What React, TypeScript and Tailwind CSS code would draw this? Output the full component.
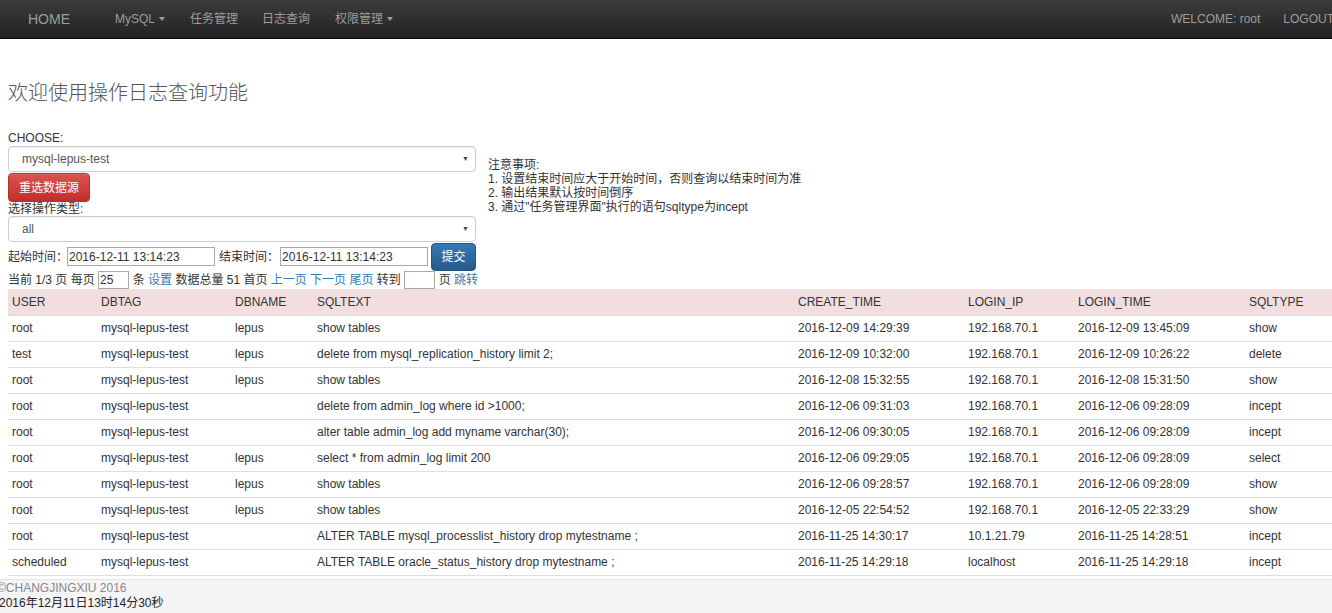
import React from 'react';

const rows = [
  ['root', 'mysql-lepus-test', 'lepus', 'show tables', '2016-12-09 14:29:39', '192.168.70.1', '2016-12-09 13:45:09', 'show'],
  ['test', 'mysql-lepus-test', 'lepus', 'delete from mysql_replication_history limit 2;', '2016-12-09 10:32:00', '192.168.70.1', '2016-12-09 10:26:22', 'delete'],
  ['root', 'mysql-lepus-test', 'lepus', 'show tables', '2016-12-08 15:32:55', '192.168.70.1', '2016-12-08 15:31:50', 'show'],
  ['root', 'mysql-lepus-test', '', 'delete from admin_log where id >1000;', '2016-12-06 09:31:03', '192.168.70.1', '2016-12-06 09:28:09', 'incept'],
  ['root', 'mysql-lepus-test', '', 'alter table admin_log add myname varchar(30);', '2016-12-06 09:30:05', '192.168.70.1', '2016-12-06 09:28:09', 'incept'],
  ['root', 'mysql-lepus-test', 'lepus', 'select * from admin_log limit 200', '2016-12-06 09:29:05', '192.168.70.1', '2016-12-06 09:28:09', 'select'],
  ['root', 'mysql-lepus-test', 'lepus', 'show tables', '2016-12-06 09:28:57', '192.168.70.1', '2016-12-06 09:28:09', 'show'],
  ['root', 'mysql-lepus-test', 'lepus', 'show tables', '2016-12-05 22:54:52', '192.168.70.1', '2016-12-05 22:33:29', 'show'],
  ['root', 'mysql-lepus-test', '', 'ALTER TABLE mysql_processlist_history drop mytestname ;', '2016-11-25 14:30:17', '10.1.21.79', '2016-11-25 14:28:51', 'incept'],
  ['scheduled', 'mysql-lepus-test', '', 'ALTER TABLE oracle_status_history drop mytestname ;', '2016-11-25 14:29:18', 'localhost', '2016-11-25 14:29:18', 'incept'],
];

const headers = ['USER', 'DBTAG', 'DBNAME', 'SQLTEXT', 'CREATE_TIME', 'LOGIN_IP', 'LOGIN_TIME', 'SQLTYPE'];
const widths = [89, 134, 82, 481, 170, 110, 171, 87];

function Caret() {
  return <span className="inline-block w-0 h-0 ml-[4px] border-x-[3px] border-x-transparent border-t-[4px] border-t-current align-middle" />;
}

function FakeSelect({ value }: { value: string }) {
  return (
    <div className="h-[26px] w-[468px] border border-[#ccc] rounded-[4px] bg-white shadow-[inset_0_1px_1px_rgba(0,0,0,0.075)] flex items-center pl-[13px] pr-[6px] text-[12px] text-[#555]">
      <span className="flex-1">{value}</span>
      <span className="text-[7px] text-[#444]">▼</span>
    </div>
  );
}

export default function App() {
  return (
    <div className="min-h-[613px] bg-white text-[#333] text-[12px] font-['Liberation_Sans','Noto_Sans_CJK_SC',sans-serif] overflow-hidden">
      {/* Navbar */}
      <div className="h-[39px] bg-linear-to-b from-[#3c3c3c] to-[#222] border-b border-[#080808] flex items-center text-[#9d9d9d] text-[12px] whitespace-nowrap">
        <span className="ml-[28px] text-[14px]">HOME</span>
        <span className="ml-[45px] flex items-center">MySQL<Caret /></span>
        <span className="ml-[25px]">任务管理</span>
        <span className="ml-[24px]">日志查询</span>
        <span className="ml-[25px] flex items-center">权限管理<Caret /></span>
        <span className="ml-auto">WELCOME: root</span>
        <span className="ml-[23px] mr-[-2px]">LOGOUT</span>
      </div>

      <h3 className="mt-[43px] ml-[8px] h-[22px] leading-[22px] text-[20px] text-[#555] font-light">欢迎使用操作日志查询功能</h3>

      <div className="flex mt-[27px] ml-[8px]">
        <div className="w-[470px] flex flex-col">
          <div className="h-[14px] leading-[14px]">CHOOSE:</div>
          <div className="mt-[1px]"><FakeSelect value="mysql-lepus-test" /></div>
          <div className="mt-[1px]">
            <button className="h-[29px] px-[10px] rounded-[4px] text-white text-[12px] bg-linear-to-b from-[#d9534f] to-[#c12e2a] border border-[#b92c28] shadow-[inset_0_1px_0_rgba(255,255,255,0.15)]">重选数据源</button>
          </div>
          <div className="h-[14px] leading-[14px]">选择操作类型:</div>
          <FakeSelect value="all" />
          <div className="h-[29px] flex items-center whitespace-nowrap">
            <span>起始时间：</span>
            <div className="h-[19px] w-[148px] border border-[#a9a9a9] flex items-center pl-[1px] ml-[-1px]">2016-12-11 13:14:23</div>
            <span className="ml-[4px]">结束时间：</span>
            <div className="h-[19px] w-[148px] border border-[#a9a9a9] flex items-center pl-[1px] ml-[1px]">2016-12-11 13:14:23</div>
            <button className="ml-[3px] h-[28px] w-[45px] rounded-[4px] text-white text-[12px] bg-linear-to-b from-[#337ab7] to-[#265a88] border border-[#245580]">提交</button>
          </div>
          <div className="h-[18px] flex items-center whitespace-nowrap">
            <span>当前 1/3 页 每页&nbsp;</span>
            <div className="h-[18px] w-[34px] border border-[#a9a9a9] flex items-center pl-[1px]">25</div>
            <span>&nbsp;条 <span className="text-[#337ab7]">设置</span> 数据总量 51 首页 <span className="text-[#337ab7]">上一页 下一页 尾页</span> 转到&nbsp;</span>
            <div className="h-[18px] w-[34px] border border-[#a9a9a9]" />
            <span>&nbsp;页 <span className="text-[#337ab7]">跳转</span></span>
          </div>
        </div>
        <div className="ml-[10px] mt-[27px] leading-[14px] whitespace-nowrap">
          <div>注意事项:</div>
          <div>1. 设置结束时间应大于开始时间，否则查询以结束时间为准</div>
          <div>2. 输出结果默认按时间倒序</div>
          <div>3. 通过"任务管理界面"执行的语句sqltype为incept</div>
        </div>
      </div>

      <table className="ml-[8px] table-fixed border-collapse text-[12px] w-[1324px]">
        <colgroup>
          {widths.map((w, i) => <col key={i} style={{ width: w }} />)}
        </colgroup>
        <thead>
          <tr className="bg-[#f2dede] h-[26px]">
            {headers.map(h => <th key={h} className="text-left font-normal px-[4px]">{h}</th>)}
          </tr>
        </thead>
        <tbody>
          {rows.map((r, i) => (
            <tr key={i} className="h-[26px] border-t border-b border-[#ddd]">
              {r.map((c, j) => <td key={j} className="px-[4px] whitespace-nowrap overflow-hidden">{c}</td>)}
            </tr>
          ))}
        </tbody>
      </table>

      <div className="mt-[3px] bg-[#f5f5f5] border-t border-[#e5e5e5] pt-[1px] pb-[6px] leading-[15px] whitespace-nowrap">
        <div className="ml-[-3px] text-[#888]">©CHANGJINGXIU 2016</div>
        <div className="ml-[-1px] text-[#222]">2016年12月11日13时14分30秒</div>
      </div>
    </div>
  );
}
